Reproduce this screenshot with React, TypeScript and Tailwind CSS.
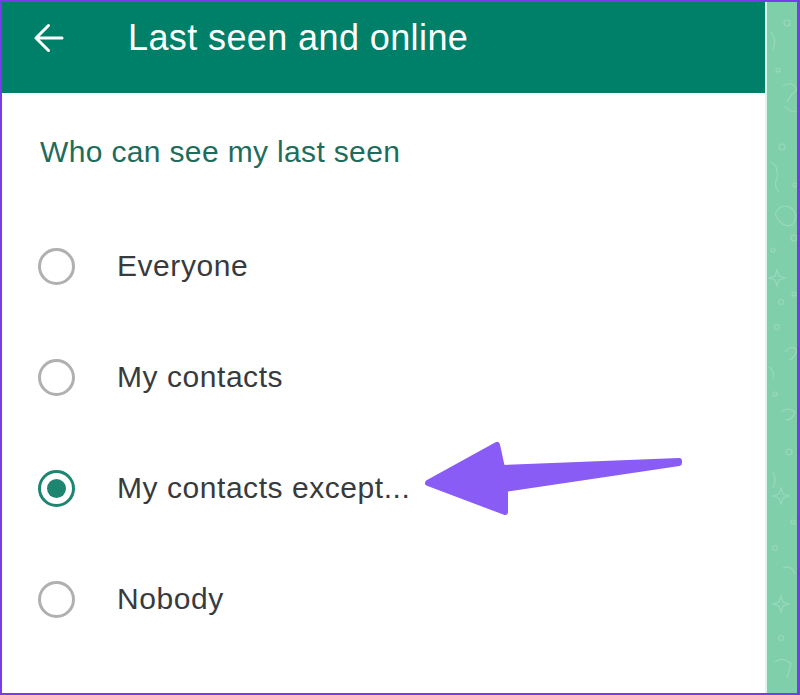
import React from "react";

const options = [
  { label: "Everyone", selected: false },
  { label: "My contacts", selected: false },
  { label: "My contacts except...", selected: true },
  { label: "Nobody", selected: false },
];

function Radio({ selected }: { selected: boolean }) {
  if (selected) {
    return (
      <span className="mt-[2px] grid place-items-center w-[37px] h-[37px] shrink-0 rounded-full border-[3.5px] border-[#1d8570]">
        <span className="w-[19px] h-[19px] rounded-full bg-[#1d8570]" />
      </span>
    );
  }
  return <span className="mt-[2px] w-[37px] h-[37px] shrink-0 rounded-full border-[3px] border-[#b0b0b0]" />;
}

function Doodles() {
  // faint wallpaper pattern in the chat strip
  return (
    <svg className="w-full h-full" viewBox="0 0 30 691" fill="none" stroke="#99d9bc" strokeWidth="1.1">
      <circle cx="20" cy="21" r="3" />
      <path d="M4 30 q6 8 2 18" />
      <circle cx="11" cy="68" r="2" />
      <path d="M16 84 q10 -6 14 4 q-6 4 -10 12" />
      <path d="M18 104 q4 6 12 6" />
      <circle cx="15" cy="145" r="3" />
      <circle cx="28" cy="183" r="2" />
      <path d="M4 160 q8 4 6 16 q-4 8 2 14" />
      <path d="M8 212 q6 -12 16 -6 q8 6 2 16 q-10 6 -18 -10z" />
      <circle cx="27" cy="236" r="3" />
      <circle cx="6" cy="248" r="2" />
      <path d="M10 268 l2 6 l6 2 l-6 2 l-2 6 l-2 -6 l-6 -2 l6 -2z" />
      <circle cx="14" cy="300" r="2.5" />
      <circle cx="27" cy="292" r="2" />
      <circle cx="10" cy="325" r="2.5" />
      <path d="M18 350 q6 -8 12 -2 q-2 8 -8 10" />
      <path d="M2 365 q6 4 4 12" />
      <circle cx="8" cy="392" r="2" />
      <path d="M14 410 q6 -6 14 0 q-2 8 -10 8" />
      <circle cx="22" cy="450" r="3" />
      <path d="M6 470 q4 8 0 16" />
      <path d="M14 486 l2 6 l6 2 l-6 2 l-2 6 l-2 -6 l-6 -2 l6 -2z" />
      <circle cx="26" cy="520" r="2" />
      <circle cx="8" cy="546" r="2.5" />
      <path d="M16 566 q8 -4 12 6" />
      <path d="M14 594 l2 6 l6 2 l-6 2 l-2 6 l-2 -6 l-6 -2 l6 -2z" />
      <circle cx="14" cy="636" r="2.5" />
      <path d="M8 660 q8 -6 16 2 l-4 14" />
    </svg>
  );
}

export default function App() {
  return (
    <div
      className="relative w-[800px] h-[695px] flex overflow-hidden bg-white border-t-2 border-l-2 border-b-2 border-r-[3px] border-[#7a3ce8]"
      style={{ fontFamily: '"Liberation Sans", Arial, sans-serif' }}
    >
      <div className="flex-1 flex flex-col">
        {/* header */}
        <div className="h-[91px] shrink-0 bg-[#008069] pt-[14px]">
          <div className="h-[44px] flex items-center">
            <svg
              className="ml-[31px] w-[32px] h-[32px]"
              viewBox="0 0 32 32"
              fill="none"
              stroke="white"
              strokeWidth="3"
              strokeLinecap="round"
              strokeLinejoin="round"
            >
              <path d="M29 16 H3 M15.5 3.5 L3 16 L15.5 28.5" />
            </svg>
            <span className="ml-[63px] text-[36px] leading-[44px] text-white tracking-[0.4px]">
              Last seen and online
            </span>
          </div>
        </div>

        {/* section */}
        <div className="mt-[44px] pl-[38px] text-[30px] leading-none text-[#1e6c5b] tracking-[0.35px]">
          Who can see my last seen
        </div>

        <div className="mt-[43px] flex flex-col">
          {options.map((o) => (
            <div key={o.label} className="h-[111px] flex items-center pl-[36px] gap-[42px]">
              <Radio selected={o.selected} />
              <span className="text-[30px] leading-none text-[#383b3d] tracking-[0.55px]">{o.label}</span>
            </div>
          ))}
        </div>
      </div>

      {/* chat wallpaper strip */}
      <div className="w-[2px] bg-[#e2f5eb]" />
      <div className="w-[30px] bg-[#80cfab]">
        <Doodles />
      </div>

      {/* annotation arrow */}
      <svg
        className="absolute left-[416px] top-[433px] w-[272px] h-[88px] pointer-events-none"
        viewBox="418 435 272 88"
      >
        <polygon
          points="428,483 497,445 502,468 679,461 679,463 505,489 505,512"
          fill="#8a5cf6"
          stroke="#8a5cf6"
          strokeWidth="6"
          strokeLinejoin="round"
        />
      </svg>
    </div>
  );
}
